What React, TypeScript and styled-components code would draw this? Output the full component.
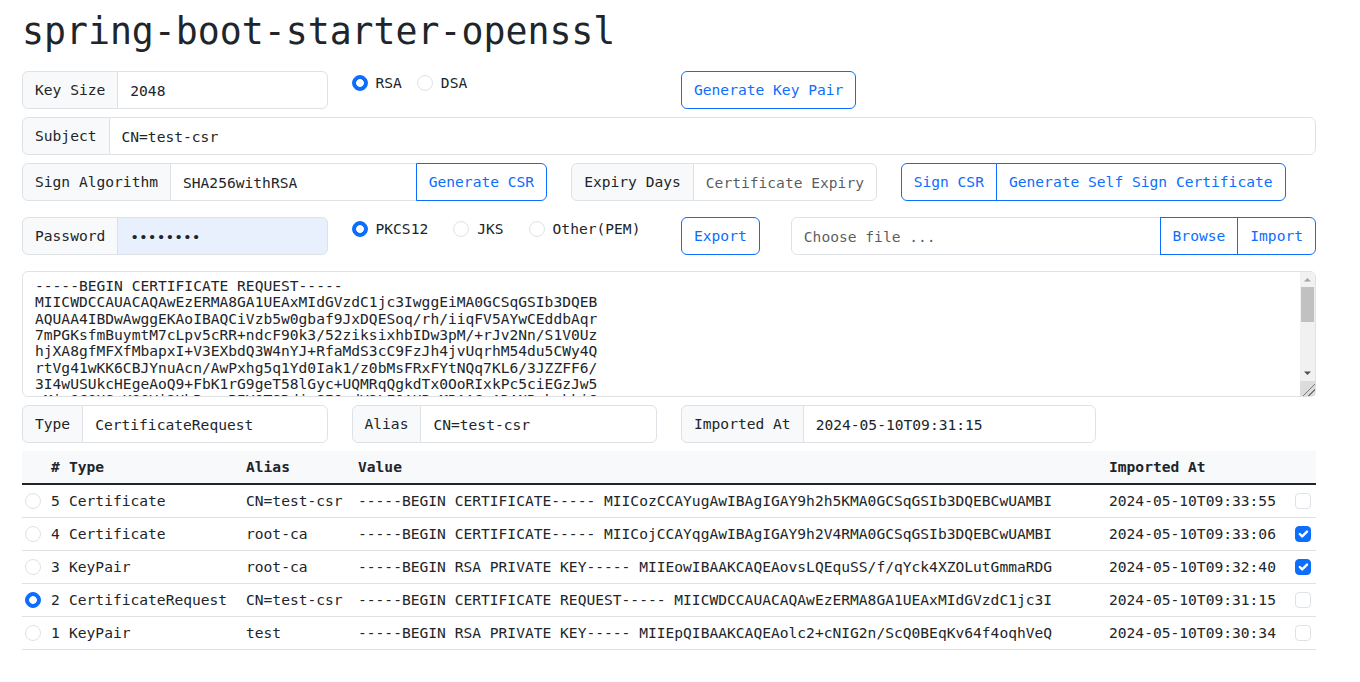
import React from "react";
import styled, { createGlobalStyle } from "styled-components";

const mono = `"DejaVu Sans Mono", "Liberation Mono", monospace`;

const GlobalStyle = createGlobalStyle`
  * {
    box-sizing: border-box;
  }
  body {
    margin: 0;
    background: #fff;
    color: #212529;
    font-family: ${mono};
    font-size: 14.6px;
    line-height: 24px;
  }
`;

const Page = styled.div`
  width: 1294px;
  margin-left: 22px;
  padding-top: 8px;
`;

const Title = styled.h1`
  margin: 0 0 15px;
  font-size: 36.5px;
  line-height: 48px;
  font-weight: 400;
  color: #212529;
`;

const Row = styled.div<{ $mb: number }>`
  display: grid;
  grid-template-columns: repeat(12, minmax(0, 1fr));
  column-gap: 24px;
  margin-bottom: ${({ $mb }) => $mb}px;
`;

const Col = styled.div<{ $span: number }>`
  grid-column: span ${({ $span }) => $span};
  display: flex;
  align-items: flex-start;
`;

const InputGroup = styled.div<{ $auto?: boolean }>`
  display: flex;
  align-items: stretch;
  width: ${({ $auto }) => ($auto ? "auto" : "100%")};
  && > * {
    border-radius: 0;
  }
  && > * + * {
    margin-left: -1px;
  }
  && > :first-child {
    border-top-left-radius: 6px;
    border-bottom-left-radius: 6px;
  }
  && > :last-child {
    border-top-right-radius: 6px;
    border-bottom-right-radius: 6px;
  }
`;

const GroupText = styled.span`
  display: flex;
  align-items: center;
  padding: 6px 12px;
  background: #f8f9fa;
  border: 1px solid #dee2e6;
  white-space: nowrap;
  color: #212529;
`;

const Field = styled.input<{ $autofill?: boolean }>`
  flex: 1 1 auto;
  min-width: 0;
  height: 38px;
  padding: 6px 12px;
  font: inherit;
  color: #212529;
  background: ${({ $autofill }) => ($autofill ? "#e8f0fe" : "#fff")};
  border: 1px solid #dee2e6;
  outline: none;
  &::placeholder {
    color: rgba(33, 37, 41, 0.75);
  }
`;

const Button = styled.button`
  height: 38px;
  padding: 6px 12px;
  font: inherit;
  color: #0d6efd;
  background: transparent;
  border: 1px solid #0d6efd;
  border-radius: 6px;
  white-space: nowrap;
  cursor: pointer;
`;

const Checks = styled.div<{ $gap: number }>`
  display: flex;
  gap: ${({ $gap }) => $gap}px;
`;

const CheckLabel = styled.label`
  display: flex;
  align-items: center;
  gap: 8px;
  height: 24px;
  white-space: nowrap;
`;

const Radio = styled.input.attrs({ type: "radio" })`
  appearance: none;
  display: block;
  flex: none;
  margin: 0;
  width: 16px;
  height: 16px;
  border: 1px solid #dee2e6;
  border-radius: 50%;
  background: #fff;
  &:checked {
    border-color: #0d6efd;
    background: radial-gradient(circle, #fff 0 3.5px, #0d6efd 4.2px);
  }
`;

const EditorWrap = styled.div`
  position: relative;
  width: 100%;
`;

const Editor = styled.textarea`
  display: block;
  width: 100%;
  height: 126px;
  margin: 0;
  padding: 6px 28px 6px 12px;
  font: inherit;
  line-height: 16.33px;
  color: #212529;
  border: 1px solid #dee2e6;
  border-radius: 6px;
  outline: none;
  resize: vertical;
  overflow: hidden;
  white-space: pre;

  &::-webkit-resizer {
    background: #dcdcdc
      linear-gradient(
        135deg,
        transparent 0 58%,
        #777 58% 63%,
        transparent 63% 76%,
        #777 76% 81%,
        transparent 81%
      );
  }
`;

/* drawn scrollbar lying over the textarea's right edge */
const ScrollBar = styled.div`
  position: absolute;
  top: 1px;
  right: 1px;
  bottom: 16px;
  width: 15px;
  display: flex;
  flex-direction: column;
  background: #f1f1f1;
  border-top-right-radius: 5px;
  pointer-events: none;
`;

const ScrollArrow = styled.svg`
  display: block;
  flex: none;
`;

const Track = styled.div`
  flex: 1 1 auto;
  padding: 0 1px;
`;

const Thumb = styled.div`
  height: 35px;
  background: #c1c1c1;
`;

const Table = styled.table`
  width: 100%;
  border-collapse: collapse;
  table-layout: fixed;
`;

const Th = styled.th`
  padding: 4px;
  text-align: left;
  font-weight: 700;
  background: #f8f9fa;
  border-bottom: 2px solid #212529;
  white-space: nowrap;
`;

const Td = styled.td<{ $pl?: number; $pr?: number }>`
  padding: 4px ${({ $pr }) => $pr ?? 4}px 4px ${({ $pl }) => $pl ?? 4}px;
  border-bottom: 1px solid #dee2e6;
  white-space: nowrap;
  overflow: hidden;
  vertical-align: middle;
`;

const BoxWrap = styled.span`
  position: relative;
  display: block;
  width: 16px;
  height: 16px;
  margin-left: auto;
`;

const Box = styled.input.attrs({ type: "checkbox" })`
  appearance: none;
  display: block;
  margin: 0;
  width: 16px;
  height: 16px;
  border: 1px solid #dee2e6;
  border-radius: 4px;
  background: #fff;
  &:checked {
    background: #0d6efd;
    border-color: #0d6efd;
  }
`;

const Tick = styled.svg`
  position: absolute;
  inset: 0;
  pointer-events: none;
`;

const Check = ({ on }: { on: boolean }) => (
  <BoxWrap>
    <Box defaultChecked={on} />
    {on && (
      <Tick width="16" height="16" viewBox="0 0 20 20">
        <path d="m6 10 3 3 6-6" fill="none" stroke="#fff" strokeWidth="3" strokeLinecap="round" strokeLinejoin="round" />
      </Tick>
    )}
  </BoxWrap>
);

const csr = [
  "-----BEGIN CERTIFICATE REQUEST-----",
  "MIICWDCCAUACAQAwEzERMA8GA1UEAxMIdGVzdC1jc3IwggEiMA0GCSqGSIb3DQEB",
  "AQUAA4IBDwAwggEKAoIBAQCiVzb5w0gbaf9JxDQESoq/rh/iiqFV5AYwCEddbAqr",
  "7mPGKsfmBuymtM7cLpv5cRR+ndcF90k3/52ziksixhbIDw3pM/+rJv2Nn/S1V0Uz",
  "hjXA8gfMFXfMbapxI+V3EXbdQ3W4nYJ+RfaMdS3cC9FzJh4jvUqrhM54du5CWy4Q",
  "rtVg41wKK6CBJYnuAcn/AwPxhg5q1Yd0Iak1/z0bMsFRxFYtNQq7KL6/3JZZFF6/",
  "3I4wUSUkcHEgeAoQ9+FbK1rG9geT58lGyc+UQMRqQgkdTx0OoRIxkPc5ciEGzJw5",
  "xMiu8C0HSvK80Vi2UhBe+nBIYOTSRdjcSI0wdY2LE0AHBgMBAAGgADANBgkqhkiG",
  "9w0BAQsFAAOCAQEAJ3xKqv8Yb1nTzR0fWc6lUe4pQm2sHd7oVaXgN5yKiLtB0rEw",
  "Pq1sU8dCz4VhLm0aRj7YgT2eNbFk9wXo3iHc6KpZuDn5tQyMlEr1vBa8SgJxO2fW",
  "k7AeHs0dQn4Ry1uLcPz9mGtVb6wKoIj3FxNqE2hU5aYsDl8TpMgZr0Cv1eWiB7nO",
  "yJ4fKb9QsRt2mXcA6pLdHu0GwVz3Ek8NaTi5oYgF1hMjCqSe7UrPnD2lBvWxZ0Ia",
  "Hq3Gm8sTn2Lw9aRf0Xk==",
  "-----END CERTIFICATE REQUEST-----",
].join("\n");

const rows = [
  { id: 5, type: "Certificate", alias: "CN=test-csr", value: "-----BEGIN CERTIFICATE----- MIICozCCAYugAwIBAgIGAY9h2h5KMA0GCSqGSIb3DQEBCwUAMBI", at: "2024-05-10T09:33:55", picked: false, sel: false },
  { id: 4, type: "Certificate", alias: "root-ca", value: "-----BEGIN CERTIFICATE----- MIICojCCAYqgAwIBAgIGAY9h2V4RMA0GCSqGSIb3DQEBCwUAMBI", at: "2024-05-10T09:33:06", picked: false, sel: true },
  { id: 3, type: "KeyPair", alias: "root-ca", value: "-----BEGIN RSA PRIVATE KEY----- MIIEowIBAAKCAQEAovsLQEquSS/f/qYck4XZOLutGmmaRDG", at: "2024-05-10T09:32:40", picked: false, sel: true },
  { id: 2, type: "CertificateRequest", alias: "CN=test-csr", value: "-----BEGIN CERTIFICATE REQUEST----- MIICWDCCAUACAQAwEzERMA8GA1UEAxMIdGVzdC1jc3I", at: "2024-05-10T09:31:15", picked: true, sel: false },
  { id: 1, type: "KeyPair", alias: "test", value: "-----BEGIN RSA PRIVATE KEY----- MIIEpQIBAAKCAQEAolc2+cNIG2n/ScQ0BEqKv64f4oqhVeQ", at: "2024-05-10T09:30:34", picked: false, sel: false },
];

export default function App() {
  return (
    <Page>
      <GlobalStyle />
      <Title>spring-boot-starter-openssl</Title>

      <Row $mb={8}>
        <Col $span={3}>
          <InputGroup>
            <GroupText>Key Size</GroupText>
            <Field defaultValue="2048" />
          </InputGroup>
        </Col>
        <Col $span={3}>
          <Checks $gap={15}>
            <CheckLabel>
              <Radio name="algo" defaultChecked />
              RSA
            </CheckLabel>
            <CheckLabel>
              <Radio name="algo" />
              DSA
            </CheckLabel>
          </Checks>
        </Col>
        <Col $span={3}>
          <Button>Generate Key Pair</Button>
        </Col>
      </Row>

      <Row $mb={8}>
        <Col $span={12}>
          <InputGroup>
            <GroupText>Subject</GroupText>
            <Field defaultValue="CN=test-csr" />
          </InputGroup>
        </Col>
      </Row>

      <Row $mb={16}>
        <Col $span={5}>
          <InputGroup>
            <GroupText>Sign Algorithm</GroupText>
            <Field defaultValue="SHA256withRSA" />
            <Button>Generate CSR</Button>
          </InputGroup>
        </Col>
        <Col $span={3}>
          <InputGroup>
            <GroupText>Expiry Days</GroupText>
            <Field placeholder="Certificate Expiry" />
          </InputGroup>
        </Col>
        <Col $span={4}>
          <InputGroup $auto>
            <Button>Sign CSR</Button>
            <Button>Generate Self Sign Certificate</Button>
          </InputGroup>
        </Col>
      </Row>

      <Row $mb={16}>
        <Col $span={3}>
          <InputGroup>
            <GroupText>Password</GroupText>
            <Field type="password" defaultValue="changeit" $autofill />
          </InputGroup>
        </Col>
        <Col $span={3}>
          <Checks $gap={25}>
            <CheckLabel>
              <Radio name="store" defaultChecked />
              PKCS12
            </CheckLabel>
            <CheckLabel>
              <Radio name="store" />
              JKS
            </CheckLabel>
            <CheckLabel>
              <Radio name="store" />
              Other(PEM)
            </CheckLabel>
          </Checks>
        </Col>
        <Col $span={1}>
          <Button>Export</Button>
        </Col>
        <Col $span={5}>
          <InputGroup>
            <Field placeholder="Choose file ..." />
            <Button>Browse</Button>
            <Button>Import</Button>
          </InputGroup>
        </Col>
      </Row>

      <Row $mb={8}>
        <Col $span={12}>
          <EditorWrap>
            <Editor defaultValue={csr} spellCheck={false} />
            <ScrollBar>
              <ScrollArrow width="15" height="15" viewBox="0 0 15 15">
                <path d="M4 9.5 7.5 6 11 9.5z" fill="#a3a3a3" />
              </ScrollArrow>
              <Track>
                <Thumb />
              </Track>
              <ScrollArrow width="15" height="15" viewBox="0 0 15 15">
                <path d="M4 5.5 7.5 9 11 5.5z" fill="#505050" />
              </ScrollArrow>
            </ScrollBar>
          </EditorWrap>
        </Col>
      </Row>

      <Row $mb={8}>
        <Col $span={3}>
          <InputGroup>
            <GroupText>Type</GroupText>
            <Field defaultValue="CertificateRequest" />
          </InputGroup>
        </Col>
        <Col $span={3}>
          <InputGroup>
            <GroupText>Alias</GroupText>
            <Field defaultValue="CN=test-csr" />
          </InputGroup>
        </Col>
        <Col $span={4}>
          <InputGroup>
            <GroupText>Imported At</GroupText>
            <Field defaultValue="2024-05-10T09:31:15" />
          </InputGroup>
        </Col>
      </Row>

      <Table>
        <colgroup>
          <col style={{ width: 25 }} />
          <col style={{ width: 18 }} />
          <col style={{ width: 177 }} />
          <col style={{ width: 112 }} />
          <col style={{ width: 751 }} />
          <col style={{ width: 179 }} />
          <col style={{ width: 32 }} />
        </colgroup>
        <thead>
          <tr>
            <Th />
            <Th>#</Th>
            <Th>Type</Th>
            <Th>Alias</Th>
            <Th>Value</Th>
            <Th>Imported At</Th>
            <Th />
          </tr>
        </thead>
        <tbody>
          {rows.map((r) => (
            <tr key={r.id}>
              <Td $pl={3} $pr={0}>
                <Radio name="row" defaultChecked={r.picked} />
              </Td>
              <Td>{r.id}</Td>
              <Td>{r.type}</Td>
              <Td>{r.alias}</Td>
              <Td>{r.value}</Td>
              <Td>{r.at}</Td>
              <Td $pl={0} $pr={5}>
                <Check on={r.sel} />
              </Td>
            </tr>
          ))}
        </tbody>
      </Table>
    </Page>
  );
}
